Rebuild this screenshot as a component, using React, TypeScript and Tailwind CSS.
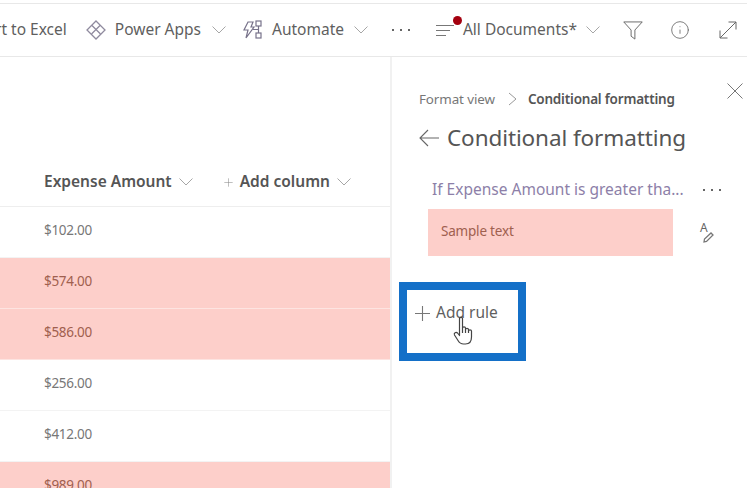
import { Info, Plus } from 'lucide-react';

const font = "font-['Noto_Sans','Open_Sans',sans-serif]";

const rows = [
  { amount: '$102.00', hit: false },
  { amount: '$574.00', hit: true },
  { amount: '$586.00', hit: true },
  { amount: '$256.00', hit: false },
  { amount: '$412.00', hit: false },
  { amount: '$989.00', hit: true },
];

const Chevron = ({ className = '' }: { className?: string }) => (
  <svg width="14" height="8" viewBox="0 0 14 8" fill="none" stroke="#a6a6a6" strokeWidth="1" className={className}>
    <path d="M0.5 0.5 L7 7 L13.5 0.5" />
  </svg>
);

const Dots = ({ className = '' }: { className?: string }) => (
  <div className={`flex gap-[6px] ${className}`}>
    <span className="w-[2px] h-[2px] bg-[#666666]" />
    <span className="w-[2px] h-[2px] bg-[#666666]" />
    <span className="w-[2px] h-[2px] bg-[#666666]" />
  </div>
);

const PowerAppsIcon = () => (
  <svg width="20" height="20" viewBox="0 0 20 20" fill="none" stroke="#8f8a9e" strokeWidth="1.3">
    <path d="M10 1 L19 10 L10 19 L1 10 Z" />
    <path d="M6 5.5 L14.5 14 M14 5.5 L5.5 14" />
  </svg>
);

const AutomateIcon = () => (
  <svg width="21" height="20" viewBox="0 0 21 20" fill="none" stroke="#77728a" strokeWidth="1.2">
    <path d="M6 2 H11 L9 7 H12 L4 18 L6 10 H2 Z" />
    <rect x="14" y="1" width="5" height="5" />
    <rect x="14" y="13" width="5" height="5" />
    <path d="M16.5 6 V13 M11 9.5 H16.5" />
  </svg>
);

const ViewIcon = () => (
  <div className="relative w-[20px] h-[14px] mr-[9px]">
    <svg width="20" height="14" viewBox="0 0 20 14" fill="none" stroke="#777777" strokeWidth="1">
      <path d="M2 2.5 H20 M2 7.5 H16 M2 12.5 H12" />
    </svg>
    <span className="absolute top-[-7px] left-[19px] w-[9px] h-[9px] rounded-full bg-[#a4000f]" />
  </div>
);

const FilterIcon = () => (
  <svg width="20" height="19" viewBox="0 0 21 19" fill="none" stroke="#666666" strokeWidth="1" className="mr-[27px]">
    <path d="M0.8 0.5 H20.2 L12.5 9 V18.5 L8.5 15.5 V9 Z" />
  </svg>
);

const ExpandIcon = () => (
  <svg width="18" height="18" viewBox="0 0 18 18" fill="none" stroke="#666666" strokeWidth="1">
    <path d="M1 17 L17 1 M9.5 1 H17 V8.5 M1 9.5 V17 H8.5" />
  </svg>
);

const PaintIcon = () => (
  <div className="relative w-[16px] h-[22px]">
    <span className={`absolute left-[1px] top-[-1px] text-[12px] leading-[14px] text-[#666666] ${font}`}>A</span>
    <svg width="16" height="22" viewBox="0 0 16 22" fill="none" stroke="#777777" strokeWidth="1.3" className="absolute top-0 left-0">
      <path d="M5 20 L5.5 17 L12 11 L14 13 L7.5 19.5 Z" />
    </svg>
  </div>
);

const HandCursor = () => (
  <svg width="25" height="30" viewBox="0 0 24 30" fill="#ffffff" stroke="#444444" strokeWidth="1.2" strokeLinejoin="round">
    <path d="M7 2.5 C7 1 10 1 10 2.5 V12 C10 10.5 13 10.5 13 12 V13.5 C13 12 16 12 16 13.5 V15 C16 13.5 19 13.5 19 15 V21 C19 25 17 28 13 28 H11 C8 28 7 27 5.5 24.5 L2 19 C1 17 3.5 15.5 5 17 L7 19.5 Z" />
    <path d="M10 12 V17 M13 13.5 V17 M16 15 V17" />
  </svg>
);

export default function App() {
  return (
    <div className={`relative w-[747px] h-[488px] overflow-hidden bg-white ${font}`}>
      <div className="h-[4px] border-b border-[#e8e8e8]" />
      <div className="h-[53px] border-b border-[#e8e8e8] flex items-center justify-end pr-[10px] overflow-hidden whitespace-nowrap text-[15.5px] text-[#5f5f5f] [&>*]:shrink-0">
        <span className="mr-[19px]">Export to Excel</span>
        <PowerAppsIcon />
        <span className="ml-[9px] mr-[11px]">Power Apps</span>
        <Chevron className="mr-[16px]" />
        <AutomateIcon />
        <span className="ml-[9px] mr-[10px]">Automate</span>
        <Chevron className="mr-[24px]" />
        <Dots className="mr-[24px]" />
        <ViewIcon />
        <span>All Documents*</span>
        <Chevron className="ml-[9px] mr-[23px]" />
        <FilterIcon />
        <Info size={20} strokeWidth={1} color="#666666" className="mr-[29px]" />
        <ExpandIcon />
      </div>

      <div className="flex h-[431px]">
        <div className="w-[390px] shrink-0">
          <div className="h-[150px] flex items-end border-b border-[#eeeeee] pl-[44px] pb-[14px] text-[15.5px] font-semibold text-[#555555]">
            <div className="flex items-center h-[20px]">
              <span>Expense Amount</span>
              <Chevron className="ml-[7px] mr-[29px]" />
              <Plus size={13} strokeWidth={1} color="#888888" className="mr-[5px]" />
              <span>Add column</span>
              <Chevron className="ml-[7px]" />
            </div>
          </div>
          {rows.map(r => (
            <div
              key={r.amount}
              className={`h-[51px] pl-[44px] pb-[4px] flex items-center border-b text-[13.5px] tracking-[-0.3px] ${r.hit ? 'bg-[#fdcfca] border-[#fde4e1] text-[#a0604f]' : 'bg-white border-[#f3f3f3] text-[#777777]'}`}
            >
              {r.amount}
            </div>
          ))}
        </div>

        <div className="flex-1 border-l-2 border-[#f1f1f1] pl-[27px] relative">
          <div className="flex items-center h-[20px] mt-[32px] whitespace-nowrap">
            <span className="text-[13.4px] text-[#777777] tracking-[-0.1px]">Format view</span>
            <svg width="9" height="14" viewBox="0 0 9 14" fill="none" stroke="#999999" strokeWidth="1" className="ml-[13px] mr-[11px]">
              <path d="M1 1 L8 7 L1 13" />
            </svg>
            <span className="text-[13.5px] font-semibold text-[#555555] tracking-[-0.2px]">Conditional formatting</span>
          </div>
          <div className="flex items-center h-[36px] mt-[11px] whitespace-nowrap">
            <svg width="20" height="18" viewBox="0 0 20 18" fill="none" stroke="#666666" strokeWidth="1.1" className="mr-[8px]">
              <path d="M20 9 H1 M9 1 L1 9 L9 17" />
            </svg>
            <span className="text-[22.5px] text-[#555555] tracking-[-0.1px]">Conditional formatting</span>
          </div>
          <div className="flex items-center h-[20px] mt-[24px] ml-[13px] whitespace-nowrap">
            <span className="text-[15.5px] text-[#8d7fa8]">If Expense Amount is greater tha...</span>
            <Dots className="ml-[19px]" />
          </div>
          <div className="flex items-center mt-[9px] ml-[9px]">
            <div className="w-[245px] h-[47px] bg-[#fdcfca] flex items-center pl-[13px] pb-[2px] text-[13.5px] text-[#a0604f] tracking-[-0.2px]">
              Sample text
            </div>
            <div className="ml-[26px]"><PaintIcon /></div>
          </div>
          <svg width="16" height="16" viewBox="0 0 16 16" fill="none" stroke="#777777" strokeWidth="1" className="absolute top-[26px] right-[4px]">
            <path d="M0.5 0.5 L15.5 15.5 M15.5 0.5 L0.5 15.5" />
          </svg>
          <div className="flex items-center h-[24px] mt-[45px] ml-[-4px] text-[15.5px] text-[#5f5f5f]">
            <svg width="15" height="15" viewBox="0 0 15 15" fill="none" stroke="#777777" strokeWidth="1.1" className="mr-[6px]">
              <path d="M7.5 0 V15 M0 7.5 H15" />
            </svg>
            <span>Add rule</span>
          </div>
        </div>
      </div>

      <div className="absolute left-[399px] top-[282px] w-[127px] h-[79px] border-[8px] border-[#1470c8]" />
      <div className="absolute left-[452px] top-[316px]">
        <HandCursor />
      </div>
    </div>
  );
}
